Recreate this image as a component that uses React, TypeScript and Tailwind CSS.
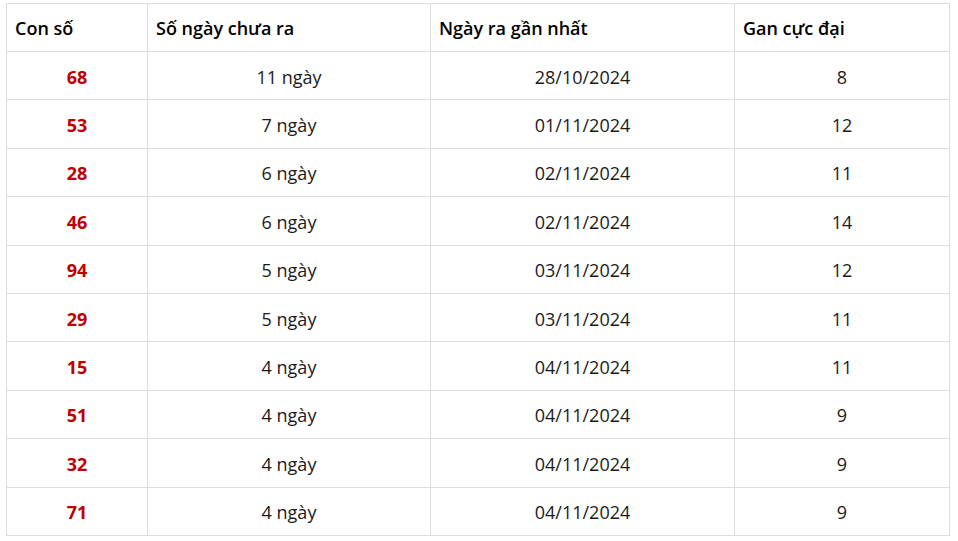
const rows = [
  ["68", "11 ngày", "28/10/2024", "8"],
  ["53", "7 ngày", "01/11/2024", "12"],
  ["28", "6 ngày", "02/11/2024", "11"],
  ["46", "6 ngày", "02/11/2024", "14"],
  ["94", "5 ngày", "03/11/2024", "12"],
  ["29", "5 ngày", "03/11/2024", "11"],
  ["15", "4 ngày", "04/11/2024", "11"],
  ["51", "4 ngày", "04/11/2024", "9"],
  ["32", "4 ngày", "04/11/2024", "9"],
  ["71", "4 ngày", "04/11/2024", "9"],
];

export default function App() {
  return (
    <div className="min-h-[541px] bg-white pl-[6px] pt-[3px] pr-[8px] font-['Open_Sans',sans-serif] text-[18px] text-[#1a1a1a]">
      <table className="w-[943px] table-fixed border-collapse">
        <colgroup>
          <col className="w-[141px]" />
          <col className="w-[283px]" />
          <col className="w-[304px]" />
          <col className="w-[215px]" />
        </colgroup>
        <thead>
          <tr className="h-[48px]">
            {["Con số", "Số ngày chưa ra", "Ngày ra gần nhất", "Gan cực đại"].map((h) => (
              <th
                key={h}
                className="border border-[#dddddd] px-2 pt-[2px] text-left font-semibold text-black"
              >
                {h}
              </th>
            ))}
          </tr>
        </thead>
        <tbody>
          {rows.map((r) => (
            <tr key={r[0]} className="h-[48.4px]">
              <td className="border border-[#dddddd] pt-[3px] text-center font-bold text-[#c00000]">
                {r[0]}
              </td>
              <td className="border border-[#dddddd] pt-[3px] text-center">{r[1]}</td>
              <td className="border border-[#dddddd] pt-[3px] text-center">{r[2]}</td>
              <td className="border border-[#dddddd] pt-[3px] text-center">{r[3]}</td>
            </tr>
          ))}
        </tbody>
      </table>
    </div>
  );
}
